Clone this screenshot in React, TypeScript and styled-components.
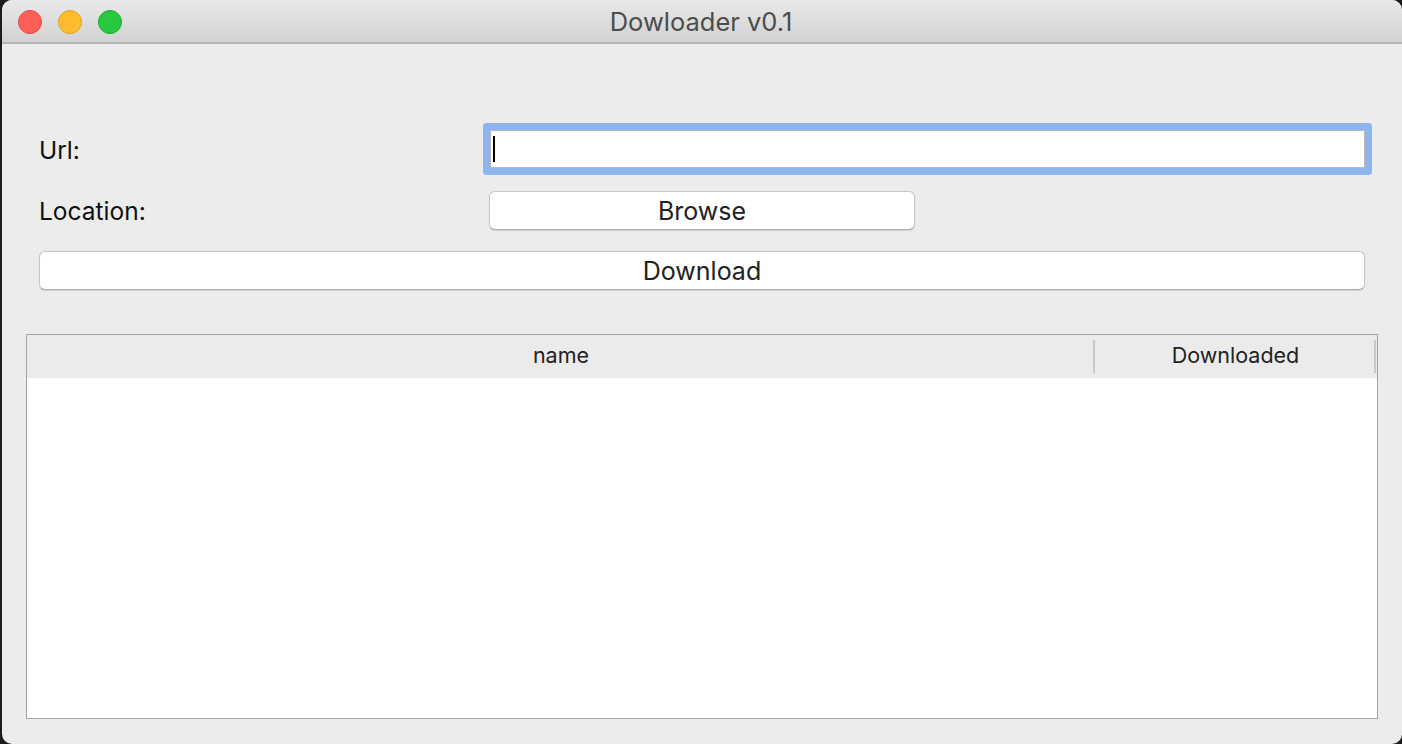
import React from "react";
import styled, { createGlobalStyle } from "styled-components";

const Global = createGlobalStyle`
  html, body { margin: 0; padding: 0; background: #1c1c1c; }
  body { width: 1402px; height: 744px; overflow: hidden; font-family: Inter, "Noto Sans", sans-serif; }
`;

const Screen = styled.div`
  width: 1402px;
  height: 744px;
  display: flex;
  padding-left: 2px;
  box-sizing: border-box;
`;

const Window = styled.div`
  flex: 1;
  display: flex;
  flex-direction: column;
  background: #ececec;
  border-radius: 10px;
  overflow: hidden;
`;

const TitleBar = styled.div`
  height: 42px;
  flex: none;
  position: relative;
  display: flex;
  align-items: center;
  justify-content: center;
  background: linear-gradient(#e9e9e9, #d2d2d2);
  border-bottom: 2px solid #b3b3b3;
`;

const Lights = styled.div`
  position: absolute;
  left: 16px;
  top: 10px;
  display: flex;
  gap: 16px;
`;

const Light = styled.span<{ $c: string; $b: string }>`
  width: 22px;
  height: 22px;
  border-radius: 50%;
  background: ${(p) => p.$c};
  border: 1px solid ${(p) => p.$b};
`;

const Title = styled.div`
  font-size: 25.5px;
  color: #4c4c4c;
  margin-left: -2px;
  margin-top: 1px;
`;

const Content = styled.div`
  flex: 1;
  display: flex;
  flex-direction: column;
  padding: 86px 24px 25px 24px;
`;

const Form = styled.div`
  display: grid;
  grid-template-columns: 450px 1fr;
  row-gap: 21px;
  padding: 0 4px 0 13px;
  align-items: center;
`;

const Label = styled.div`
  font-size: 24.5px;
  color: #111;
`;

const Field = styled.div`
  height: 38px;
  margin: 0 9px 2px 1px;
  background: #fff;
  border: 1px solid #b8b8b8;
  box-sizing: border-box;
  box-shadow: 0 0 0 7px #8db6ee;
  border-radius: 1px;
  display: flex;
  align-items: center;
  padding-left: 2px;
`;

const Caret = styled.span`
  width: 2px;
  height: 26px;
  background: #000;
`;

const Button = styled.div<{ $w?: string }>`
  height: 39px;
  box-sizing: border-box;
  width: ${(p) => p.$w || "auto"};
  background: #fff;
  border: 1px solid #c6c6c6;
  border-bottom-color: #adadad;
  border-radius: 6px;
  box-shadow: 0 1px 1px rgba(0, 0, 0, 0.12);
  display: flex;
  align-items: center;
  justify-content: center;
  font-size: 25px;
  color: #222;
`;

const FullRow = styled.div`
  grid-column: 1 / span 2;
  margin-right: 9px;
`;

const Table = styled.div`
  margin-top: 44px;
  flex: 1;
  border: 1px solid #a3a3a3;
  background: #fff;
  display: flex;
  flex-direction: column;
`;

const Header = styled.div`
  height: 43px;
  background: #ebebeb;
  display: flex;
  padding-right: 1px;
`;

const HeadCell = styled.div<{ $w?: string }>`
  ${(p) => (p.$w ? `width: ${p.$w};` : "flex: 1;")}
  position: relative;
  display: flex;
  align-items: center;
  justify-content: center;
  padding-bottom: 3px;
  box-sizing: border-box;
  font-size: 21.5px;
  color: #222;
  &::after {
    content: "";
    position: absolute;
    right: 0;
    top: 5px;
    bottom: 5px;
    width: 2px;
    background: #c8c8c8;
  }
`;

export default function App() {
  return (
    <>
      <Global />
      <Screen>
        <Window>
          <TitleBar>
            <Lights>
              <Light $c="#ff5f57" $b="#e2463f" />
              <Light $c="#febc2e" $b="#e1a116" />
              <Light $c="#28c840" $b="#14ae2a" />
            </Lights>
            <Title>Dowloader v0.1</Title>
          </TitleBar>
          <Content>
            <Form>
              <Label>Url:</Label>
              <Field>
                <Caret />
              </Field>
              <Label>Location:</Label>
              <Button $w="426px">Browse</Button>
              <FullRow>
                <Button>Download</Button>
              </FullRow>
            </Form>
            <Table>
              <Header>
                <HeadCell>name</HeadCell>
                <HeadCell $w="281px">Downloaded</HeadCell>
              </Header>
            </Table>
          </Content>
        </Window>
      </Screen>
    </>
  );
}
